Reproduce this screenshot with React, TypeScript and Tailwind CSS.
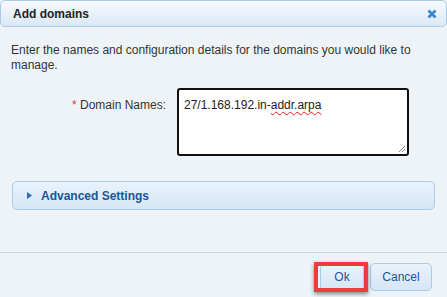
import React from "react";

export default function App() {
  return (
    <div
      className="relative w-[447px] h-[297px] overflow-hidden bg-[#eef3f8] flex flex-col text-[12px] text-[#333]"
      style={{ fontFamily: '"Liberation Sans", Arial, sans-serif' }}
    >
      {/* Header */}
      <div className="h-[27px] shrink-0 mx-0 flex items-center justify-between pl-[12px] pr-[9px] rounded-[5px] border border-[#a9cbe6] bg-gradient-to-b from-[#f7fafd] to-[#dbe8f5]">
        <span className="font-bold text-[12px] text-[#222]">Add domains</span>
        <svg width="10" height="10" viewBox="0 0 10 10">
          <path d="M1.5 1.5 L8.5 8.5 M8.5 1.5 L1.5 8.5" stroke="#3b86cc" strokeWidth="2.8" strokeLinecap="butt" />
        </svg>
      </div>

      {/* Body */}
      <div className="flex-1 flex flex-col px-[11px] pt-[16px]">
        <p className="leading-[15px] text-[12px] text-[#333] pr-[20px]">
          Enter the names and configuration details for the domains you would like to manage.
        </p>
        <div className="flex items-start mt-[15px]">
          <div className="w-[166px] text-right pr-[11px] pt-[8px] text-[12px] text-[#333]">
            <span className="text-[#e0402f]">*</span> Domain Names:
          </div>
          <div className="w-[232px] h-[68px] border-2 border-[#111] rounded-[3px] bg-white relative px-[5px] pt-[6px]">
            <span className="text-[12px] text-[#222]">
              27/1.168.192.in-
              <span className="underline decoration-wavy decoration-[#e02020] decoration-[1px] underline-offset-[2px]">addr.arpa</span>
            </span>
            <svg className="absolute right-[1px] bottom-[1px]" width="8" height="8" viewBox="0 0 8 8">
              <path d="M7 1 L1 7 M7 4 L4 7" stroke="#888" strokeWidth="1" />
            </svg>
          </div>
        </div>

        <div className="mt-[25px] mx-[1px] h-[29px] rounded-[5px] border border-[#a9cbe6] bg-gradient-to-b from-[#e8f2fb] to-[#d6e7f7] flex items-center pl-[14px]">
          <svg width="5" height="7" viewBox="0 0 5 7" className="mr-[9px]">
            <path d="M0 0 L5 3.5 L0 7 Z" fill="#2a6fb8" />
          </svg>
          <span className="font-bold text-[12px] text-[#1a5599]">Advanced Settings</span>
        </div>
      </div>

      {/* Footer */}
      <div className="h-[45px] shrink-0 border-t border-[#d4d7da] flex justify-end items-start pt-[10px] pr-[15px] gap-[6px]">
        <button className="w-[44px] h-[28px] rounded-[5px] border border-[#a9cbe6] bg-gradient-to-b from-[#eaf3fb] to-[#d5e6f6] text-[12px] text-[#1a5599]">
          Ok
        </button>
        <button className="w-[62px] h-[28px] rounded-[5px] border border-[#a9cbe6] bg-gradient-to-b from-[#eaf3fb] to-[#d5e6f6] text-[12px] text-[#1a5599]">
          Cancel
        </button>
      </div>

      {/* Annotation highlight */}
      <div className="absolute left-[314px] top-[262px] w-[54px] h-[30px] border-[4px] border-[#ee3b3b] shadow-[0_2px_4px_rgba(0,0,0,0.45)]" />
    </div>
  );
}
